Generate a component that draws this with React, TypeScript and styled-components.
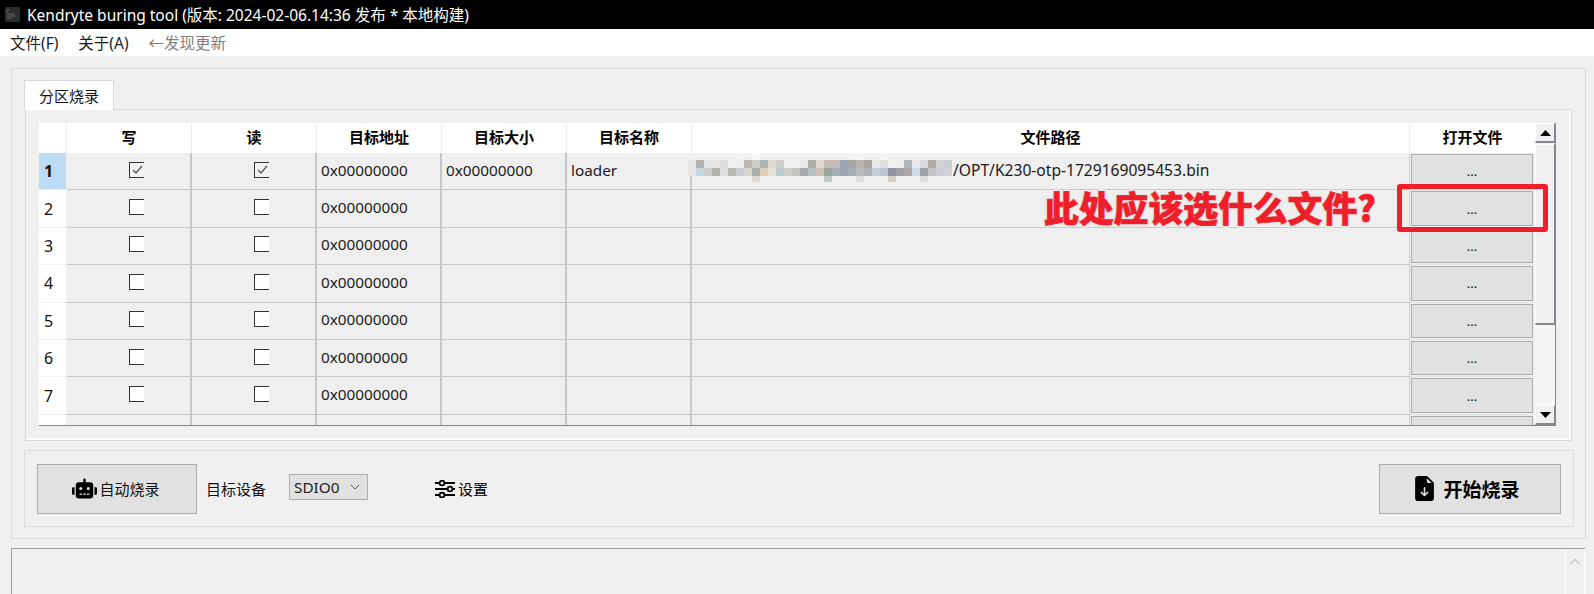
import React from "react";
import styled, { createGlobalStyle } from "styled-components";
import { FaRobot } from "react-icons/fa";
import { BsFileEarmarkArrowDownFill } from "react-icons/bs";

const Global = createGlobalStyle`
  html, body { margin: 0; padding: 0; background: #f0f0f0; }
  body { font-family: "Noto Sans", "Noto Sans CJK SC", sans-serif; color: #111; }
`;

const Page = styled.div`
  position: relative;
  width: 1594px;
  height: 594px;
  overflow: hidden;
  display: flex;
  flex-direction: column;
  background: #f0f0f0;
`;

const TitleBar = styled.div`
  height: 29px;
  flex: none;
  background: #000;
  color: #fff;
  display: flex;
  align-items: center;
  gap: 7px;
  padding-left: 5px;
  font-size: 15.5px;
  white-space: nowrap;
`;

const MenuBar = styled.div`
  height: 27px;
  flex: none;
  background: #fff;
  display: flex;
  align-items: center;
  gap: 20px;
  padding-left: 10px;
  font-size: 15.5px;
`;

const MenuItem = styled.span<{ $muted?: boolean }>`
  color: ${(p) => (p.$muted ? "#808080" : "#1a1a1a")};
`;

const Outer = styled.div`
  margin: 12px 8px 0 11px;
  height: 471px;
  flex: none;
  box-sizing: border-box;
  border: 1px solid #dcdcdc;
  padding: 11px 12px 0 12px;
  display: flex;
  flex-direction: column;
`;

const Tab = styled.div`
  align-self: flex-start;
  position: relative;
  z-index: 1;
  box-sizing: border-box;
  width: 90px;
  height: 30px;
  margin-bottom: -1px;
  background: #fff;
  border: 1px solid #d9d9d9;
  border-bottom: none;
  font-size: 15px;
  display: flex;
  align-items: center;
  justify-content: center;
`;

const Pane = styled.div`
  box-sizing: border-box;
  width: 1547px;
  margin-left: 1px;
  height: 332px;
  border: 1px solid #dadada;
  padding: 13px 0 0 13px;
  box-shadow: inset -2px -2px 0 #fff;
`;

const TableFrame = styled.div`
  width: 1517px;
  height: 303px;
  display: flex;
  box-sizing: border-box;
  border-bottom: 1px solid #85858d;
  overflow: hidden;
`;

const Table = styled.div`
  width: 1496px;
  flex: none;
`;

const grid = `
  display: grid;
  grid-template-columns: 28px repeat(5, 125px) 718px 125px;
`;

const HeadRow = styled.div`
  ${grid}
  height: 30px;
  background: #fff;
`;

const HeadCell = styled.div`
  box-sizing: border-box;
  border-right: 1px solid #ececec;
  padding-bottom: 3px;
  font-size: 15px;
  font-weight: 700;
  color: #000;
  display: flex;
  align-items: center;
  justify-content: center;
  &:last-child { border-right: none; }
`;

const Row = styled.div`
  ${grid}
  height: 37.4px;
`;

const RowHead = styled.div<{ $active?: boolean }>`
  box-sizing: border-box;
  background: ${(p) => (p.$active ? "#bcdcf4" : "#fff")};
  border-right: 1px solid #f0f0f0;
  border-bottom: 1px solid #f0f0f0;
  padding-left: 5px;
  display: flex;
  align-items: center;
  font-size: 16px;
  font-weight: ${(p) => (p.$active ? 700 : 400)};
  color: #111;
`;

const Cell = styled.div`
  position: relative;
  box-sizing: border-box;
  background: #efefef;
  border-right: 2px solid #c6c6c6;
  border-bottom: 1px solid #c8c8c8;
  padding: 0 0 3px 4px;
  display: flex;
  align-items: center;
  font-size: 15.3px;
  color: #1a1a1a;
  white-space: nowrap;
`;

const CheckCell = styled(Cell)`
  justify-content: center;
  padding: 0 0 3px 16px;
`;

const PathCell = styled(Cell)`
  border-right: 1px solid #cfcfcf;
  padding-left: 261px;
  font-size: 15.6px;
`;

const Mosaic = styled.svg`
  position: absolute;
  left: -4px;
  top: 0;
`;

const BtnCell = styled.div`
  background: #efefef;
  box-sizing: border-box;
  padding: 1px 2px 1px 1px;
  border-bottom: 1px solid #e4e4e4;
`;

const DotsButton = styled.div`
  box-sizing: border-box;
  height: 100%;
  background: #e1e1e1;
  border: 1px solid #adadad;
  font-size: 13px;
  display: flex;
  align-items: center;
  justify-content: center;
  color: #111;
`;

const Box = styled.div<{ $checked?: boolean }>`
  box-sizing: border-box;
  width: 15px;
  height: 16px;
  background: ${(p) => (p.$checked ? "#f2f2f2" : "#fff")};
  border: 1px solid #333;
  border-right: none;
  display: flex;
  align-items: center;
  justify-content: center;
`;

const ScrollBar = styled.div`
  width: 21px;
  flex: none;
  box-sizing: border-box;
  border-right: 1px solid #85858d;
  display: flex;
  flex-direction: column;
  background-color: #fff;
  background-image: conic-gradient(#ececec 25%, #fff 0 50%, #ececec 0 75%, #fff 0);
  background-size: 2px 2px;
`;

const ScrollBtn = styled.div`
  box-sizing: border-box;
  height: 20px;
  flex: none;
  background: #f0f0f0;
  border-top: 1px solid #fff;
  border-left: 1px solid #fff;
  border-right: 1px solid #85858d;
  border-bottom: 2px solid #85858d;
  display: flex;
  align-items: center;
  justify-content: center;
`;

const Thumb = styled.div`
  box-sizing: border-box;
  height: 181px;
  flex: none;
  margin-top: 1px;
  background: #f0f0f0;
  border-top: 1px solid #fff;
  border-left: 1px solid #fff;
  border-right: 1px solid #85858d;
  border-bottom: 2px solid #85858d;
`;

const Spacer = styled.div`
  flex: 1;
`;

const Lower = styled.div`
  box-sizing: border-box;
  margin-top: 9px;
  width: 1550px;
  height: 77px;
  border: 1px solid #dcdcdc;
  padding: 0 12px;
  display: flex;
  align-items: center;
`;

const BigButton = styled.div`
  box-sizing: border-box;
  height: 50px;
  background: #e1e1e1;
  border: 1px solid #adadad;
  display: flex;
  align-items: center;
  justify-content: center;
`;

const AutoButton = styled(BigButton)`
  width: 160px;
  gap: 2px;
  padding-right: 2px;
  font-size: 15px;
`;

const StartButton = styled(BigButton)`
  width: 182px;
  margin-left: auto;
  gap: 6px;
  padding-right: 8px;
  font-size: 19px;
  font-weight: 700;
  color: #000;
`;

const Label = styled.span`
  margin-left: 9px;
  font-size: 15px;
`;

const Combo = styled.div`
  box-sizing: border-box;
  width: 79px;
  height: 26px;
  margin-left: 23px;
  margin-top: -3px;
  background: #e1e1e1;
  border: 1px solid #adadad;
  display: flex;
  align-items: center;
  justify-content: space-between;
  padding: 0 7px 0 4px;
  font-size: 15.3px;
  color: #222;
`;

const SettingsGroup = styled.div`
  margin-left: 67px;
  display: flex;
  align-items: center;
  gap: 3px;
  font-size: 15px;
  color: #000;
`;

const LogBox = styled.div`
  margin: 9px 9px 0 11px;
  flex: 1;
  box-sizing: border-box;
  border-top: 1px solid #a0a0a0;
  border-left: 1px solid #a0a0a0;
  display: flex;
  justify-content: flex-end;
`;

const LogScroll = styled.div`
  width: 20px;
  box-sizing: border-box;
  border-left: 1px solid #fff;
  border-right: 1px solid #fff;
  padding-top: 9px;
  display: flex;
  justify-content: center;
  align-items: flex-start;
`;

const Annotation = styled.div`
  position: absolute;
  left: 1044px;
  top: 182px;
  font-family: "Noto Sans CJK SC", sans-serif;
  font-size: 34.8px;
  line-height: 50px;
  font-weight: 900;
  color: #ee1f2b;
  -webkit-text-stroke: 0.7px #ee1f2b;
  text-shadow: 2px 0 #e9e9e9, -2px 0 #e9e9e9, 0 2px #e9e9e9, 0 -2px #e9e9e9,
    1.5px 1.5px #e9e9e9, -1.5px 1.5px #e9e9e9, 1.5px -1.5px #e9e9e9, -1.5px -1.5px #e9e9e9;
  white-space: nowrap;
`;

const Highlight = styled.div`
  position: absolute;
  left: 1397px;
  top: 184px;
  width: 151px;
  height: 48px;
  box-sizing: border-box;
  border: 5px solid #ee1f2b;
  border-radius: 3px;
`;

const m1 = "efefef,efefef,efefef,efefef,efefef,efefef,f4f4f4,efefef,f8f8f8,efefef,efefef,efefef,efefef,efefef,efefef,efefef,efefef,efefef,efefef,efefef,f4f4f4,f6f6f6,efefef,efefef,f6f6f6,efefef,efefef,efefef,efefef,efefef,efefef,efefef,efefef".split(",");
const m2 = "e6e6e6,b5b2ae,e0e4e8,eae6e0,dcdcdc,efefef,ececec,b8b8b0,cfcdc9,adb3b3,dfdad5,cfcfcf,efefef,efefef,e8e8e8,afaba7,e3dacf,c4bdb7,c4bdb7,9ca5b8,a8a6a6,b8b4ad,a9a4a0,e8e8e8,dedede,efefef,eeeeee,b2b5bd,e8e8e8,dcdadc,aeaaa3,d4d4d6,cbcdd0".split(",");
const m3 = "e6e6e6,c5d8e6,cdcdcd,b2b2ac,dedede,b9b5b0,c9ccd2,dcd4cf,a8afaa,dfcfba,e6e0d0,b9cdd3,d0d0cb,c4c3bc,aaa6aa,b5c0c8,ccc1b4,9aa5a0,a5aeb8,9ea5b0,a5b0b8,b8bcc0,a9b5b8,c5cfdc,b8c4d0,8f93a3,9ea0a6,aba8a2,cadcec,9ea2a8,c5c2c6,ccd0d6,d2d4d8".split(",");
const m4: Record<number, string> = { 8: "e0d8d2", 17: "c0c8c8", 21: "e0e0e0", 25: "d8ccc0", 29: "dedede" };

const BlurredPath = () => (
  <Mosaic width={266} height={30} shapeRendering="crispEdges">
    {m1.map((c, i) => <rect key={"a" + i} x={i * 8} y={0} width={8} height={7} fill={"#" + c} />)}
    {m2.map((c, i) => <rect key={"b" + i} x={i * 8} y={7} width={8} height={8} fill={"#" + c} />)}
    {m3.map((c, i) => <rect key={"c" + i} x={i * 8} y={15} width={8} height={8} fill={"#" + c} />)}
    {Object.entries(m4).map(([i, c]) => <rect key={"d" + i} x={Number(i) * 8} y={23} width={8} height={6} fill={"#" + c} />)}
  </Mosaic>
);

const AppIcon = () => (
  <svg width="15" height="15" viewBox="0 0 15 15">
    <rect width="15" height="15" rx="1.5" fill="#2b2d2e" />
    <path d="M2 2.5h2M2 2.5v2.5h1.5M2 7h7M2 9h9M2 11h5" stroke="#5f6264" strokeWidth="1" fill="none" />
  </svg>
);

const Check = () => (
  <svg width="13" height="13" viewBox="0 0 13 13">
    <path d="M2 7l3 3 6-7" stroke="#555" strokeWidth="1.3" fill="none" />
  </svg>
);

const Tri = ({ down }: { down?: boolean }) => (
  <svg width="11" height="6" viewBox="0 0 11 6">
    <path d={down ? "M0 0h11L5.5 6z" : "M5.5 0L11 6H0z"} fill="#000" />
  </svg>
);

const SlidersIcon = () => (
  <svg width="20" height="18" viewBox="0 0 20 18">
    <path d="M0 3h20M0 9h20M0 15h20" stroke="#000" strokeWidth="2" />
    <circle cx="7" cy="3" r="2.4" fill="#f0f0f0" stroke="#000" strokeWidth="1.8" />
    <circle cx="15" cy="9" r="2.4" fill="#f0f0f0" stroke="#000" strokeWidth="1.8" />
    <circle cx="7" cy="15" r="2.4" fill="#f0f0f0" stroke="#000" strokeWidth="1.8" />
  </svg>
);

const rows = [
  { n: 1, addr: "0x00000000", size: "0x00000000", name: "loader", path: "/OPT/K230-otp-1729169095453.bin", on: true },
  { n: 2, addr: "0x00000000" },
  { n: 3, addr: "0x00000000" },
  { n: 4, addr: "0x00000000" },
  { n: 5, addr: "0x00000000" },
  { n: 6, addr: "0x00000000" },
  { n: 7, addr: "0x00000000" },
  { n: 8, addr: "" },
] as { n: number; addr: string; size?: string; name?: string; path?: string; on?: boolean }[];

const heads = ["", "写", "读", "目标地址", "目标大小", "目标名称", "文件路径", "打开文件"];

export default function App() {
  return (
    <Page>
      <Global />
      <TitleBar>
        <AppIcon />
        <span>Kendryte buring tool (版本: 2024-02-06.14:36 发布 * 本地构建)</span>
      </TitleBar>
      <MenuBar>
        <MenuItem>文件(F)</MenuItem>
        <MenuItem>关于(A)</MenuItem>
        <MenuItem $muted>←发现更新</MenuItem>
      </MenuBar>
      <Outer>
        <Tab>分区烧录</Tab>
        <Pane>
          <TableFrame>
            <Table>
              <HeadRow>
                {heads.map((h, i) => <HeadCell key={i}>{h}</HeadCell>)}
              </HeadRow>
              {rows.map((r) => (
                <Row key={r.n}>
                  <RowHead $active={r.on}>{r.n < 8 ? r.n : ""}</RowHead>
                  <CheckCell>{r.n < 8 && <Box $checked={r.on}>{r.on && <Check />}</Box>}</CheckCell>
                  <CheckCell>{r.n < 8 && <Box $checked={r.on}>{r.on && <Check />}</Box>}</CheckCell>
                  <Cell>{r.addr}</Cell>
                  <Cell>{r.size}</Cell>
                  <Cell>{r.name}</Cell>
                  <PathCell>
                    {r.on && <BlurredPath />}
                    {r.path}
                  </PathCell>
                  <BtnCell><DotsButton>{r.n < 8 ? "..." : ""}</DotsButton></BtnCell>
                </Row>
              ))}
            </Table>
            <ScrollBar>
              <ScrollBtn><Tri /></ScrollBtn>
              <Thumb />
              <Spacer />
              <ScrollBtn><Tri down /></ScrollBtn>
            </ScrollBar>
          </TableFrame>
        </Pane>
        <Lower>
          <AutoButton><FaRobot size={25} color="#000" />自动烧录</AutoButton>
          <Label>目标设备</Label>
          <Combo>
            SDIO0
            <svg width="10" height="6" viewBox="0 0 10 6"><path d="M1 1l4 4 4-4" stroke="#555" fill="none" /></svg>
          </Combo>
          <SettingsGroup><SlidersIcon />设置</SettingsGroup>
          <StartButton><BsFileEarmarkArrowDownFill size={25} color="#000" />开始烧录</StartButton>
        </Lower>
      </Outer>
      <LogBox>
        <LogScroll>
          <svg width="10" height="7" viewBox="0 0 10 7"><path d="M0.5 6L5 1.5 9.5 6" stroke="#c8c8c8" strokeWidth="1.5" fill="none" /></svg>
        </LogScroll>
      </LogBox>
      <Annotation>此处应该选什么文件?</Annotation>
      <Highlight />
    </Page>
  );
}
